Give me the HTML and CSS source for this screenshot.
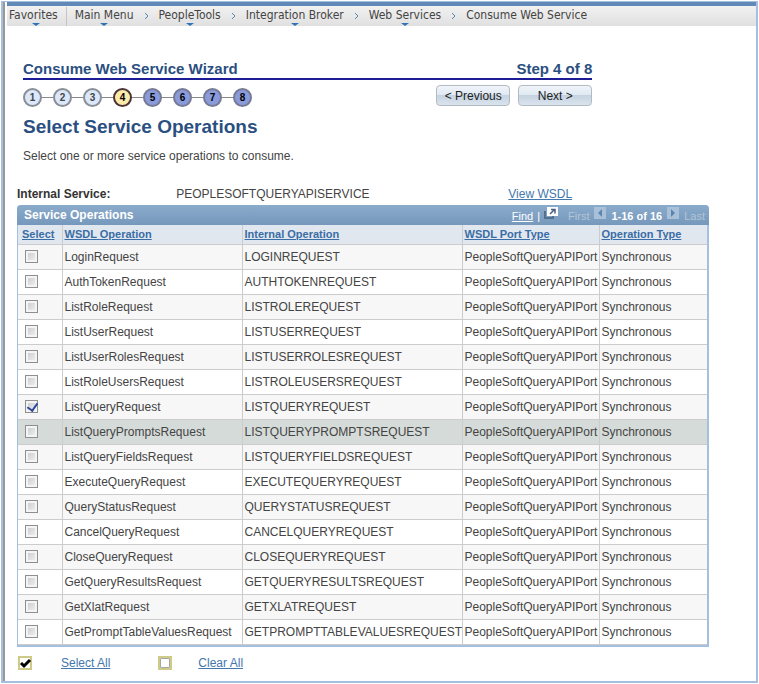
FILE: index.html
```
<!DOCTYPE html>
<html lang="en">
<head>
    <meta charset="UTF-8">
    <meta name="viewport" content="width=device-width, initial-scale=1.0">
    <title>Consume Web Service</title>
    <link rel="stylesheet" href="styles.css">
</head>
<body>
    <div class="frame">
        <div class="page">
            <nav class="breadcrumbs">
                <a class="crumb menu favorites" href="#">Favorites</a>
                <a class="crumb menu" href="#">Main Menu</a>
                <svg class="sep" viewBox="0 0 5 8"><path d="M1 1l3 3-3 3"/></svg>
                <a class="crumb menu" href="#">PeopleTools</a>
                <svg class="sep" viewBox="0 0 5 8"><path d="M1 1l3 3-3 3"/></svg>
                <a class="crumb menu" href="#">Integration Broker</a>
                <svg class="sep" viewBox="0 0 5 8"><path d="M1 1l3 3-3 3"/></svg>
                <a class="crumb menu" href="#">Web Services</a>
                <svg class="sep" viewBox="0 0 5 8"><path d="M1 1l3 3-3 3"/></svg>
                <a class="crumb" href="#">Consume Web Service</a>
            </nav>

            <main>
                <section class="wizard">
                    <div class="wizard-title">
                        <span>Consume Web Service Wizard</span>
                        <span>Step 4 of 8</span>
                    </div>
                    <div class="wizard-bar">
                        <ol class="steps">
                            <li class="step done">1</li>
                            <li class="step done">2</li>
                            <li class="step done">3</li>
                            <li class="step current">4</li>
                            <li class="step">5</li>
                            <li class="step">6</li>
                            <li class="step">7</li>
                            <li class="step">8</li>
                        </ol>
                        <div class="buttons">
                            <button type="button">&lt; Previous</button>
                            <button type="button">Next &gt;</button>
                        </div>
                    </div>
                    <h1>Select Service Operations</h1>
                    <p class="intro">Select one or more service operations to consume.</p>
                </section>

                <section class="operations">
                    <div class="service">
                        <span class="service-label">Internal Service:</span>
                        <span class="service-name">PEOPLESOFTQUERYAPISERVICE</span>
                        <a href="#">View WSDL</a>
                    </div>

                    <div class="grid">
                        <div class="grid-title">
                            <h2>Service Operations</h2>
                            <div class="grid-nav">
                                <a href="#">Find</a>
                                <span class="bar">|</span>
                                <svg class="popout" viewBox="0 0 14 12">
                                    <path d="M1 4v7h8v-2" fill="none" stroke="#53718f" stroke-width="2"/>
                                    <path d="M3 0h11v9H3z" fill="#fff"/>
                                    <path d="M6 7l4-4M7 2.500h4v4" fill="none" stroke="#45617e" stroke-width="1.500"/>
                                </svg>
                                <span class="dim first">First</span>
                                <svg class="arrow" viewBox="0 0 12 12">
                                    <path d="M0 0h12v12H0z" fill="#a9c1d8"/>
                                    <path d="M8 2v8L4 6z" fill="#5c86b0"/>
                                </svg>
                                <span class="range">1-16 of 16</span>
                                <svg class="arrow" viewBox="0 0 12 12">
                                    <path d="M0 0h12v12H0z" fill="#a9c1d8"/>
                                    <path d="M4 2v8l4-4z" fill="#5c86b0"/>
                                </svg>
                                <span class="dim">Last</span>
                            </div>
                        </div>
                        <table>
                            <colgroup>
                                <col class="col-select">
                                <col class="col-wsdl">
                                <col class="col-internal">
                                <col class="col-port">
                                <col>
                            </colgroup>
                            <thead>
                                <tr>
                                    <th><a href="#">Select</a></th>
                                    <th><a href="#">WSDL Operation</a></th>
                                    <th><a href="#">Internal Operation</a></th>
                                    <th><a href="#">WSDL Port Type</a></th>
                                    <th><a href="#">Operation Type</a></th>
                                </tr>
                            </thead>
                            <tbody>
                                <tr><td><input type="checkbox" id="op1"></td><td><label for="op1">LoginRequest</label></td><td>LOGINREQUEST</td><td>PeopleSoftQueryAPIPort</td><td>Synchronous</td></tr>
                                <tr><td><input type="checkbox" id="op2"></td><td><label for="op2">AuthTokenRequest</label></td><td>AUTHTOKENREQUEST</td><td>PeopleSoftQueryAPIPort</td><td>Synchronous</td></tr>
                                <tr><td><input type="checkbox" id="op3"></td><td><label for="op3">ListRoleRequest</label></td><td>LISTROLEREQUEST</td><td>PeopleSoftQueryAPIPort</td><td>Synchronous</td></tr>
                                <tr><td><input type="checkbox" id="op4"></td><td><label for="op4">ListUserRequest</label></td><td>LISTUSERREQUEST</td><td>PeopleSoftQueryAPIPort</td><td>Synchronous</td></tr>
                                <tr><td><input type="checkbox" id="op5"></td><td><label for="op5">ListUserRolesRequest</label></td><td>LISTUSERROLESREQUEST</td><td>PeopleSoftQueryAPIPort</td><td>Synchronous</td></tr>
                                <tr><td><input type="checkbox" id="op6"></td><td><label for="op6">ListRoleUsersRequest</label></td><td>LISTROLEUSERSREQUEST</td><td>PeopleSoftQueryAPIPort</td><td>Synchronous</td></tr>
                                <tr><td><input type="checkbox" id="op7" checked></td><td><label for="op7">ListQueryRequest</label></td><td>LISTQUERYREQUEST</td><td>PeopleSoftQueryAPIPort</td><td>Synchronous</td></tr>
                                <tr class="active"><td><input type="checkbox" id="op8"></td><td><label for="op8">ListQueryPromptsRequest</label></td><td>LISTQUERYPROMPTSREQUEST</td><td>PeopleSoftQueryAPIPort</td><td>Synchronous</td></tr>
                                <tr><td><input type="checkbox" id="op9"></td><td><label for="op9">ListQueryFieldsRequest</label></td><td>LISTQUERYFIELDSREQUEST</td><td>PeopleSoftQueryAPIPort</td><td>Synchronous</td></tr>
                                <tr><td><input type="checkbox" id="op10"></td><td><label for="op10">ExecuteQueryRequest</label></td><td>EXECUTEQUERYREQUEST</td><td>PeopleSoftQueryAPIPort</td><td>Synchronous</td></tr>
                                <tr><td><input type="checkbox" id="op11"></td><td><label for="op11">QueryStatusRequest</label></td><td>QUERYSTATUSREQUEST</td><td>PeopleSoftQueryAPIPort</td><td>Synchronous</td></tr>
                                <tr><td><input type="checkbox" id="op12"></td><td><label for="op12">CancelQueryRequest</label></td><td>CANCELQUERYREQUEST</td><td>PeopleSoftQueryAPIPort</td><td>Synchronous</td></tr>
                                <tr><td><input type="checkbox" id="op13"></td><td><label for="op13">CloseQueryRequest</label></td><td>CLOSEQUERYREQUEST</td><td>PeopleSoftQueryAPIPort</td><td>Synchronous</td></tr>
                                <tr><td><input type="checkbox" id="op14"></td><td><label for="op14">GetQueryResultsRequest</label></td><td>GETQUERYRESULTSREQUEST</td><td>PeopleSoftQueryAPIPort</td><td>Synchronous</td></tr>
                                <tr><td><input type="checkbox" id="op15"></td><td><label for="op15">GetXlatRequest</label></td><td>GETXLATREQUEST</td><td>PeopleSoftQueryAPIPort</td><td>Synchronous</td></tr>
                                <tr><td><input type="checkbox" id="op16"></td><td><label for="op16">GetPromptTableValuesRequest</label></td><td>GETPROMPTTABLEVALUESREQUEST</td><td>PeopleSoftQueryAPIPort</td><td>Synchronous</td></tr>
                            </tbody>
                        </table>
                    </div>

                    <div class="bulk">
                        <a class="bulk-link" href="#">
                            <svg viewBox="0 0 14 14">
                                <path d="M1 1h12v12H1z" fill="#fff" stroke="#cfca86" stroke-width="2"/>
                                <path d="M3 7l3 3 6-6" fill="none" stroke="#000" stroke-width="3"/>
                            </svg>
                            <span>Select All</span>
                        </a>
                        <a class="bulk-link" href="#">
                            <svg viewBox="0 0 14 14">
                                <path d="M1 1h12v12H1z" fill="#fff" stroke="#cfca86" stroke-width="2"/>
                                <path d="M2.500 2.500h9v9h-9z" fill="none" stroke="#a3a9a6"/>
                            </svg>
                            <span>Clear All</span>
                        </a>
                    </div>
                </section>
            </main>
        </div>
    </div>
</body>
</html>
```
FILE: styles.css
```
* {
    box-sizing: border-box;
}
body {
    margin: 0;
    padding: 1px;
    background: #fff;
    color: #444;
    font: 12px/16px "Liberation Sans", Arial, sans-serif;
}
a {
    color: #4477ad;
}
.frame {
    min-height: calc(100vh - 2px);
    display: flex;
    border: 2px solid #a5bfde;
    border-top-width: 1px;
}
.page {
    flex: 1;
    border-left: 2px solid #999;
    padding-left: 2px;
}

/* breadcrumb bar */
.breadcrumbs {
    display: flex;
    align-items: center;
    height: 24px;
    border-top: 4px solid #6189b8;
    background: linear-gradient(#f1f1f1, #e0e0e0);
    font-family: "DejaVu Sans Condensed", "DejaVu Sans", sans-serif;
    font-stretch: condensed;
}
.crumb {
    position: relative;
    padding: 0 8px 2px;
    line-height: 17px;
    color: #444;
    text-decoration: none;
    white-space: nowrap;
}
.favorites {
    padding-left: 2px;
    border-right: 1px solid #c4c4c4;
}
.menu::after {
    content: "";
    position: absolute;
    left: 50%;
    bottom: 0;
    margin-left: -4px;
    border: 4px solid transparent;
    border-top: 3px solid #2f72b5;
    border-bottom: 0;
}
.sep {
    width: 5px;
    height: 8px;
    margin: 0 2px;
    fill: none;
    stroke: #5585b5;
}

/* wizard header */
.wizard {
    width: 76%;
    margin: 34px 0 0 16px;
}
.wizard-title {
    display: flex;
    justify-content: space-between;
    padding-bottom: 1px;
    border-bottom: 2px solid #1c1c94;
    color: #2b4f81;
    font-size: 15px;
    font-weight: bold;
    line-height: 17px;
}
.wizard-bar {
    display: flex;
    justify-content: space-between;
    padding-top: 5px;
}
.steps {
    display: flex;
    gap: 11px;
    margin: 3px 0 0;
    padding: 0;
    list-style: none;
}
.step {
    position: relative;
    width: 19px;
    height: 19px;
    border: 2px solid #777a94;
    border-radius: 50%;
    background: #8a9bdc;
    color: #000;
    font-size: 10px;
    font-weight: bold;
    line-height: 15px;
    text-align: center;
}
.step + .step::before {
    content: "";
    position: absolute;
    top: 7px;
    right: 17px;
    width: 11px;
    height: 1px;
    background: #888;
}
.step.done {
    background: #dbe8fb;
    border-color: #8a8f96;
    color: #444;
}
.step.current {
    background: #fdebab;
    border-color: #4a3434;
}
.buttons {
    display: flex;
    gap: 8px;
}
button {
    width: 74px;
    height: 21px;
    padding: 0;
    border: 1px solid #b4bac2;
    border-radius: 4px;
    background: linear-gradient(#f0f5fa, #dfe8f1 50%, #c5d3e0 50%, #dae4ee);
    color: #222;
    font: 12px "Liberation Sans", Arial, sans-serif;
}
h1 {
    margin: 7px 0 0;
    color: #2b4f81;
    font-size: 19px;
    line-height: 26px;
}
.intro {
    margin: 8px 0 0;
}

/* service operations */
.operations {
    margin: 22px 47px 0 10px;
}
.service {
    display: flex;
}
.service-label {
    width: 23%;
    font-weight: bold;
    color: #333;
}
.service-name {
    width: 48%;
}
.grid {
    margin-top: 3px;
    border: 1px solid #a5bfde;
    border-width: 0 2px 2px 1px;
    border-radius: 4px 4px 0 0;
}
.grid-title {
    display: flex;
    align-items: center;
    justify-content: space-between;
    height: 20px;
    margin: 0 -2px 0 -1px;
    padding: 0 4px 0 7px;
    border-radius: 4px 4px 0 0;
    background: linear-gradient(#8aabcb, #7698bc);
    color: #fff;
}
h2 {
    margin: 0;
    font-size: 12px;
}
.grid-nav {
    display: flex;
    align-items: center;
    padding-top: 2px;
    font-size: 11px;
}
.grid-nav a {
    color: #fff;
}
.bar {
    padding: 0 4px;
}
.popout {
    width: 14px;
    height: 12px;
    margin-bottom: 6px;
}
.arrow {
    width: 12px;
    height: 12px;
    margin: 0 5px 6px;
}
.dim {
    color: #b4c5d6;
}
.first {
    margin-left: 10px;
}
.range {
    font-weight: bold;
}
table {
    width: 100%;
    border-collapse: collapse;
    table-layout: fixed;
}
.col-select {
    width: 44px;
}
.col-wsdl {
    width: 180px;
}
.col-internal {
    width: 220px;
}
.col-port {
    width: 137px;
}
th,
td {
    height: 25px;
    padding: 0 0 0 2px;
    border-bottom: 1px solid #ccc;
    text-align: left;
    white-space: nowrap;
}
th + th,
td + td {
    border-left: 1px solid #ccc;
}
th {
    height: 19px;
    background: #e1e7ee;
    font-size: 11px;
}
th:first-child {
    padding-left: 4px;
}
th a {
    color: #3a6da6;
}
tbody tr:nth-child(odd) {
    background: #f7f7f7;
}
tbody tr.active {
    background: #d5dbd8;
}
td:first-child {
    padding-left: 7px;
}
input {
    appearance: none;
    display: block;
    width: 13px;
    height: 13px;
    margin: 0;
    border: 1px solid #8e8f8f;
    background: linear-gradient(135deg, #c4c8cc, #f4f4f4);
    box-shadow: inset 0 0 0 2px #f4f4f4;
}
input:checked::before {
    content: "";
    display: block;
    width: 5px;
    height: 8px;
    margin: 0 0 0 3px;
    border: solid #31479c;
    border-width: 0 2px 2px 0;
    transform: rotate(35deg);
}

/* select all / clear all */
.bulk {
    display: flex;
    gap: 48px;
    padding: 8px 1px;
}
.bulk-link {
    display: flex;
    align-items: center;
    gap: 29px;
    text-decoration: none;
}
.bulk-link span {
    text-decoration: underline;
}
.bulk-link svg {
    width: 14px;
    height: 14px;
}
.bulk-link + .bulk-link {
    gap: 26px;
}
```
